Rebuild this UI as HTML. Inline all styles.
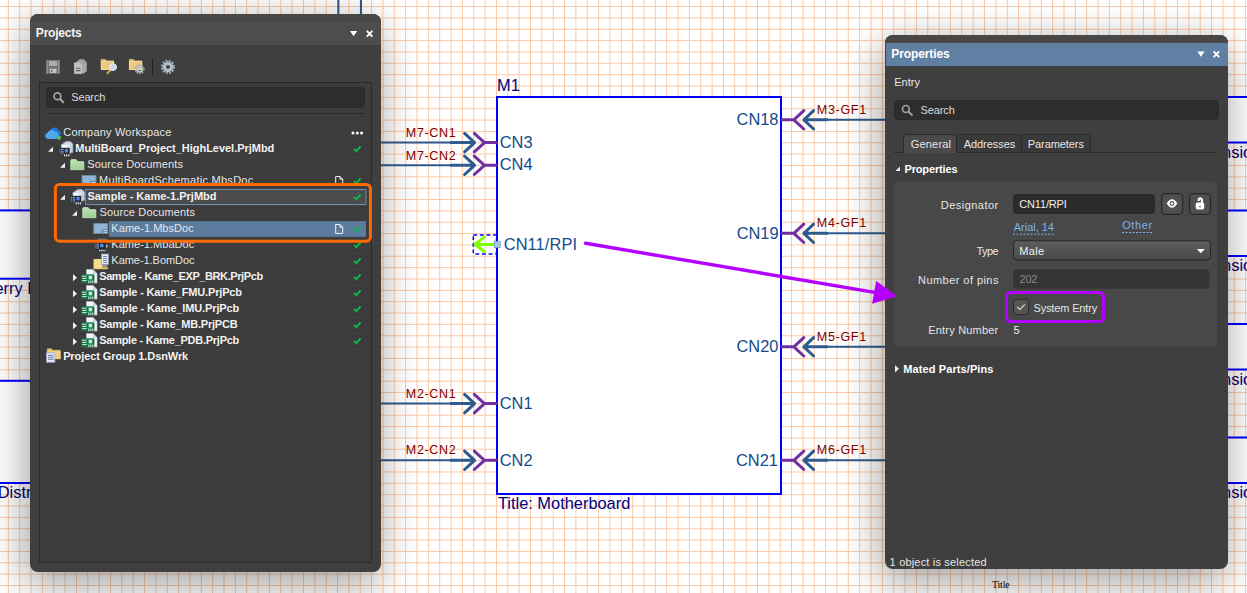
<!DOCTYPE html>
<html lang="en"><head><meta charset="utf-8"><title>Properties</title>
<style>
html,body{margin:0;padding:0;background:#ffffff;overflow:hidden}
#root{position:relative;width:1247px;height:593px;overflow:hidden;background:#ffffff;font-family:"Liberation Sans",sans-serif}
.panel{position:absolute;background:#3f3f3f;border-radius:8px;box-shadow:-3px 4px 36px rgba(0,0,0,0.245),-3px 24px 46px rgba(0,0,0,0.17);overflow:hidden}
.panel .band{position:absolute;left:0;right:0;top:0;background:#494746}
.panel .head{position:absolute;left:0;right:0}
svg text{white-space:pre}
#ui,#top{position:absolute;left:0;top:0}
</style></head><body>
<div id="root">
<svg id="sch" width="1247" height="593" viewBox="0 0 1247 593" style="position:absolute;left:0;top:0">
<rect width="1247" height="593" fill="#ffffff"/>
<path d="M8.35 0V593M19.70 0V593M31.05 0V593M42.40 0V593M53.75 0V593M65.10 0V593M76.45 0V593M87.80 0V593M99.15 0V593M110.51 0V593M121.86 0V593M133.21 0V593M144.56 0V593M155.91 0V593M167.26 0V593M178.61 0V593M189.96 0V593M201.31 0V593M212.66 0V593M224.02 0V593M235.37 0V593M246.72 0V593M258.07 0V593M269.42 0V593M280.77 0V593M292.12 0V593M303.47 0V593M314.82 0V593M326.18 0V593M337.53 0V593M348.88 0V593M360.23 0V593M371.58 0V593M382.93 0V593M394.28 0V593M405.63 0V593M416.98 0V593M428.33 0V593M439.69 0V593M451.04 0V593M462.39 0V593M473.74 0V593M485.09 0V593M496.44 0V593M507.79 0V593M519.14 0V593M530.49 0V593M541.84 0V593M553.20 0V593M564.55 0V593M575.90 0V593M587.25 0V593M598.60 0V593M609.95 0V593M621.30 0V593M632.65 0V593M644.00 0V593M655.35 0V593M666.71 0V593M678.06 0V593M689.41 0V593M700.76 0V593M712.11 0V593M723.46 0V593M734.81 0V593M746.16 0V593M757.51 0V593M768.86 0V593M780.22 0V593M791.57 0V593M802.92 0V593M814.27 0V593M825.62 0V593M836.97 0V593M848.32 0V593M859.67 0V593M871.02 0V593M882.37 0V593M893.73 0V593M905.08 0V593M916.43 0V593M927.78 0V593M939.13 0V593M950.48 0V593M961.83 0V593M973.18 0V593M984.53 0V593M995.88 0V593M1007.24 0V593M1018.59 0V593M1029.94 0V593M1041.29 0V593M1052.64 0V593M1063.99 0V593M1075.34 0V593M1086.69 0V593M1098.04 0V593M1109.39 0V593M1120.75 0V593M1132.10 0V593M1143.45 0V593M1154.80 0V593M1166.15 0V593M1177.50 0V593M1188.85 0V593M1200.20 0V593M1211.55 0V593M1222.90 0V593M1234.26 0V593M1245.61 0V593M0 6.55H1247M0 17.90H1247M0 29.25H1247M0 40.60H1247M0 51.96H1247M0 63.31H1247M0 74.66H1247M0 86.01H1247M0 97.36H1247M0 108.72H1247M0 120.07H1247M0 131.42H1247M0 142.77H1247M0 154.12H1247M0 165.48H1247M0 176.83H1247M0 188.18H1247M0 199.53H1247M0 210.88H1247M0 222.24H1247M0 233.59H1247M0 244.94H1247M0 256.29H1247M0 267.64H1247M0 279.00H1247M0 290.35H1247M0 301.70H1247M0 313.05H1247M0 324.40H1247M0 335.76H1247M0 347.11H1247M0 358.46H1247M0 369.81H1247M0 381.16H1247M0 392.52H1247M0 403.87H1247M0 415.22H1247M0 426.57H1247M0 437.92H1247M0 449.28H1247M0 460.63H1247M0 471.98H1247M0 483.33H1247M0 494.68H1247M0 506.04H1247M0 517.39H1247M0 528.74H1247M0 540.09H1247M0 551.44H1247M0 562.80H1247M0 574.15H1247M0 585.50H1247" stroke="#fbc9a5" stroke-width="1" fill="none"/>
<path d="M338.4 0V20M361 0V20" stroke="#2e5b8f" stroke-width="2" fill="none"/>
<rect x="-60" y="210.4" width="150" height="68.3" fill="#ffffff" stroke="#0000ff" stroke-width="2"/>
<rect x="-60" y="380.8" width="150" height="102.2" fill="#ffffff" stroke="#0000ff" stroke-width="2"/>
<text x="-5.50" y="293.50" fill="#000080" style='font-family:"Liberation Sans", sans-serif;font-size:16.4px;font-weight:400;' >erry Pi</text>
<text x="-2.30" y="497.70" fill="#000080" style='font-family:"Liberation Sans", sans-serif;font-size:16.4px;font-weight:400;' >Distribution</text>
<rect x="1180" y="97.0" width="120" height="45.5" fill="#ffffff" stroke="#0000ff" stroke-width="2"/>
<text x="1222.10" y="157.70" fill="#000080" style='font-family:"Liberation Sans", sans-serif;font-size:16.4px;font-weight:400;' >nsion</text>
<rect x="1180" y="210.5" width="120" height="45.5" fill="#ffffff" stroke="#0000ff" stroke-width="2"/>
<text x="1222.10" y="271.20" fill="#000080" style='font-family:"Liberation Sans", sans-serif;font-size:16.4px;font-weight:400;' >nsion</text>
<rect x="1180" y="324.0" width="120" height="45.5" fill="#ffffff" stroke="#0000ff" stroke-width="2"/>
<text x="1222.10" y="384.70" fill="#000080" style='font-family:"Liberation Sans", sans-serif;font-size:16.4px;font-weight:400;' >nsion</text>
<rect x="1180" y="437.5" width="120" height="45.5" fill="#ffffff" stroke="#0000ff" stroke-width="2"/>
<text x="1222.10" y="498.20" fill="#000080" style='font-family:"Liberation Sans", sans-serif;font-size:16.4px;font-weight:400;' >nsion</text>
<rect x="497" y="97" width="284" height="397" fill="#ffffff" stroke="#0000ff" stroke-width="2"/>
<text x="497.04" y="90.90" fill="#000080" style='font-family:"Liberation Sans", sans-serif;font-size:16.4px;font-weight:400;' >M1</text>
<text x="497.92" y="508.60" fill="#000080" style='font-family:"Liberation Sans", sans-serif;font-size:16.4px;font-weight:400;' >Title: Motherboard</text>
<path d="M360 142.6H452" stroke="#2e5b8f" stroke-width="2" fill="none"/><path d="M451 142.6H474M464.6 133.4L474.6 142.6L464.6 151.79999999999998" stroke="#2e5b8f" stroke-width="3" fill="none" stroke-linecap="round" stroke-linejoin="round"/><path d="M474.3 133.4L484.5 142.6L474.3 151.79999999999998M484.5 142.6H496" stroke="#7030a0" stroke-width="3" fill="none" stroke-linecap="round" stroke-linejoin="round"/><text x="405.85" y="136.80" fill="#800000" style='font-family:"Liberation Sans", sans-serif;font-size:12.5px;font-weight:400;letter-spacing:0.643px;' >M7-CN1</text><text x="499.73" y="147.50" fill="#144a8a" style='font-family:"Liberation Sans", sans-serif;font-size:16.4px;font-weight:400;' >CN3</text>
<path d="M360 165.3H452" stroke="#2e5b8f" stroke-width="2" fill="none"/><path d="M451 165.3H474M464.6 156.10000000000002L474.6 165.3L464.6 174.5" stroke="#2e5b8f" stroke-width="3" fill="none" stroke-linecap="round" stroke-linejoin="round"/><path d="M474.3 156.10000000000002L484.5 165.3L474.3 174.5M484.5 165.3H496" stroke="#7030a0" stroke-width="3" fill="none" stroke-linecap="round" stroke-linejoin="round"/><text x="405.85" y="159.50" fill="#800000" style='font-family:"Liberation Sans", sans-serif;font-size:12.5px;font-weight:400;letter-spacing:0.655px;' >M7-CN2</text><text x="499.73" y="170.20" fill="#144a8a" style='font-family:"Liberation Sans", sans-serif;font-size:16.4px;font-weight:400;' >CN4</text>
<path d="M360 403.6H452" stroke="#2e5b8f" stroke-width="2" fill="none"/><path d="M451 403.6H474M464.6 394.40000000000003L474.6 403.6L464.6 412.8" stroke="#2e5b8f" stroke-width="3" fill="none" stroke-linecap="round" stroke-linejoin="round"/><path d="M474.3 394.40000000000003L484.5 403.6L474.3 412.8M484.5 403.6H496" stroke="#7030a0" stroke-width="3" fill="none" stroke-linecap="round" stroke-linejoin="round"/><text x="405.85" y="397.80" fill="#800000" style='font-family:"Liberation Sans", sans-serif;font-size:12.5px;font-weight:400;letter-spacing:0.643px;' >M2-CN1</text><text x="499.73" y="408.50" fill="#144a8a" style='font-family:"Liberation Sans", sans-serif;font-size:16.4px;font-weight:400;' >CN1</text>
<path d="M360 460.3H452" stroke="#2e5b8f" stroke-width="2" fill="none"/><path d="M451 460.3H474M464.6 451.1L474.6 460.3L464.6 469.5" stroke="#2e5b8f" stroke-width="3" fill="none" stroke-linecap="round" stroke-linejoin="round"/><path d="M474.3 451.1L484.5 460.3L474.3 469.5M484.5 460.3H496" stroke="#7030a0" stroke-width="3" fill="none" stroke-linecap="round" stroke-linejoin="round"/><text x="405.85" y="454.10" fill="#800000" style='font-family:"Liberation Sans", sans-serif;font-size:12.5px;font-weight:400;letter-spacing:0.655px;' >M2-CN2</text><text x="499.73" y="465.90" fill="#144a8a" style='font-family:"Liberation Sans", sans-serif;font-size:16.4px;font-weight:400;' >CN2</text>
<path d="M826 119.8H900" stroke="#2e5b8f" stroke-width="2" fill="none"/><path d="M804.5 119.8H827M813.6 110.6L803.9 119.8L813.6 129.0" stroke="#2e5b8f" stroke-width="3" fill="none" stroke-linecap="round" stroke-linejoin="round"/><path d="M803.8 110.6L793.8 119.8L803.8 129.0M793.8 119.8H782" stroke="#7030a0" stroke-width="3" fill="none" stroke-linecap="round" stroke-linejoin="round"/><text x="816.85" y="114.00" fill="#800000" style='font-family:"Liberation Sans", sans-serif;font-size:12.5px;font-weight:400;letter-spacing:0.680px;' >M3-GF1</text><text x="736.55" y="124.70" fill="#144a8a" style='font-family:"Liberation Sans", sans-serif;font-size:16.4px;font-weight:400;' >CN18</text>
<path d="M826 233.3H900" stroke="#2e5b8f" stroke-width="2" fill="none"/><path d="M804.5 233.3H827M813.6 224.10000000000002L803.9 233.3L813.6 242.5" stroke="#2e5b8f" stroke-width="3" fill="none" stroke-linecap="round" stroke-linejoin="round"/><path d="M803.8 224.10000000000002L793.8 233.3L803.8 242.5M793.8 233.3H782" stroke="#7030a0" stroke-width="3" fill="none" stroke-linecap="round" stroke-linejoin="round"/><text x="816.85" y="226.80" fill="#800000" style='font-family:"Liberation Sans", sans-serif;font-size:12.5px;font-weight:400;letter-spacing:0.680px;' >M4-GF1</text><text x="736.64" y="238.80" fill="#144a8a" style='font-family:"Liberation Sans", sans-serif;font-size:16.4px;font-weight:400;' >CN19</text>
<path d="M826 346.8H900" stroke="#2e5b8f" stroke-width="2" fill="none"/><path d="M804.5 346.8H827M813.6 337.6L803.9 346.8L813.6 356.0" stroke="#2e5b8f" stroke-width="3" fill="none" stroke-linecap="round" stroke-linejoin="round"/><path d="M803.8 337.6L793.8 346.8L803.8 356.0M793.8 346.8H782" stroke="#7030a0" stroke-width="3" fill="none" stroke-linecap="round" stroke-linejoin="round"/><text x="816.85" y="341.00" fill="#800000" style='font-family:"Liberation Sans", sans-serif;font-size:12.5px;font-weight:400;letter-spacing:0.680px;' >M5-GF1</text><text x="736.47" y="351.70" fill="#144a8a" style='font-family:"Liberation Sans", sans-serif;font-size:16.4px;font-weight:400;' >CN20</text>
<path d="M826 460.3H900" stroke="#2e5b8f" stroke-width="2" fill="none"/><path d="M804.5 460.3H827M813.6 451.1L803.9 460.3L813.6 469.5" stroke="#2e5b8f" stroke-width="3" fill="none" stroke-linecap="round" stroke-linejoin="round"/><path d="M803.8 451.1L793.8 460.3L803.8 469.5M793.8 460.3H782" stroke="#7030a0" stroke-width="3" fill="none" stroke-linecap="round" stroke-linejoin="round"/><text x="816.85" y="453.80" fill="#800000" style='font-family:"Liberation Sans", sans-serif;font-size:12.5px;font-weight:400;letter-spacing:0.680px;' >M6-GF1</text><text x="736.04" y="465.90" fill="#144a8a" style='font-family:"Liberation Sans", sans-serif;font-size:16.4px;font-weight:400;' >CN21</text>
<rect x="473.3" y="235.1" width="23.2" height="18.9" fill="none" stroke="#0000ff" stroke-width="1.5" stroke-dasharray="3.8 2.8"/>
<path d="M475.5 244.4H495M484.4 237.1L475 244.4L484.4 251.70000000000002" stroke="#7fff00" stroke-width="3" fill="none" stroke-linecap="round" stroke-linejoin="round"/>
<rect x="494.3" y="241.5" width="6" height="6" fill="#a9c9e3" stroke="#6f9fd0" stroke-width="0.8"/>
<text x="503.73" y="249.70" fill="#144a8a" style='font-family:"Liberation Sans", sans-serif;font-size:16.4px;font-weight:400;letter-spacing:0.111px;' >CN11/RPI</text>
<text x="992.05" y="588.00" fill="#000000" style='font-family:"Liberation Serif", serif;font-size:9.8px;font-weight:400;letter-spacing:-0.148px;' >Title</text>
</svg>
<div class="panel" style="left:30px;top:14px;width:351px;height:558px"><div class="band" style="height:8px"></div><div class="head" style="top:7.6px;height:23.4px;background:#4d4d4d"></div></div>
<div class="panel" style="left:885px;top:35px;width:343px;height:534px"><div class="band" style="height:8px"></div><div class="head" style="left:1px;top:8px;height:22.8px;background:#5f80a3"></div></div>
<svg id="ui" width="1247" height="593" viewBox="0 0 1247 593">
<text x="35.87" y="36.90" fill="#f4f4f4" style='font-family:"Liberation Sans", sans-serif;font-size:12px;font-weight:700;letter-spacing:-0.219px;' >Projects</text>
<path d="M350 31h7.2l-3.6 5.2z" fill="#ffffff"/>
<path d="M366.8 30.8l5.6 5.8M372.4 30.8l-5.6 5.8" stroke="#ffffff" stroke-width="1.9" fill="none"/>
<rect x="46.4" y="60" width="13.2" height="13.7" fill="#707070"/><path d="M47.1 60v13.7M58.9 60v13.7" stroke="#9c9c9c" stroke-width="1.2"/><rect x="48.9" y="60.9" width="8.4" height="5.1" fill="#ababab"/><rect x="49.7" y="68.7" width="6.8" height="4.4" fill="#c2c2c2"/><rect x="50.9" y="69.8" width="1.5" height="2.4" fill="#6a6a6a"/><path d="M79.5 59.4h4l3 3v9h-7z" fill="#9a9a9a" stroke="#b4b4b4" stroke-width="0.6"/><path d="M77.5 61h4l3 3v9h-7z" fill="#a6a6a6" stroke="#bcbcbc" stroke-width="0.6"/><path d="M74.4 62.8h4.2l3 3v7.8h-7.2z" fill="#c4c4c4" stroke="#d0d0d0" stroke-width="0.6"/><path d="M76 68.3h4.6M76 70.6h4.6" stroke="#5a5a5a" stroke-width="1.1"/><path d="M100.8 59.699999999999996q0-0.8 0.8-0.8h3.6l1.5 1.7h6.6q0.8 0 0.8 0.8v8.6h-13.3z" fill="#d6b368"/><rect x="101.3" y="61.5" width="12.3" height="8" fill="#ebca80" stroke="#f5e2a8" stroke-width="0.8"/><path d="M107.3 73.3l3.3-3.3" stroke="#d8b060" stroke-width="1.8" stroke-linecap="round"/><circle cx="113.1" cy="67.1" r="3.4" fill="#c6d9ea" stroke="#eef3f8" stroke-width="1"/><path d="M128.9 59.699999999999996q0-0.8 0.8-0.8h3.6l1.5 1.7h6.6q0.8 0 0.8 0.8v8.6h-13.3z" fill="#d6b368"/><rect x="129.4" y="61.5" width="12.3" height="8" fill="#ebca80" stroke="#f5e2a8" stroke-width="0.8"/><circle cx="139.6" cy="69.2" r="4.2" fill="none" stroke="#9aa8b4" stroke-width="1.8" stroke-dasharray="1.5 1.14"/><circle cx="139.6" cy="69.2" r="2.6" fill="none" stroke="#b4c0ca" stroke-width="2"/><path d="M152.5 58.9v16" stroke="#1f1f1f" stroke-width="1.1"/><circle cx="168" cy="66.9" r="6" fill="none" stroke="#9eaab4" stroke-width="2.2" stroke-dasharray="1.9 1.24"/><circle cx="168" cy="66.9" r="3.6" fill="none" stroke="#b2bec8" stroke-width="3.3"/>
<rect x="39.5" y="82.5" width="332" height="480" fill="#3c3c3c" stroke="#2a2a2a" stroke-width="1"/>
<rect x="46.5" y="87.5" width="318" height="20" rx="3.5" fill="#2d2d2d" stroke="#2a2a2a" stroke-width="1"/>
<circle cx="57.4" cy="96.2" r="3.4" fill="none" stroke="#a4a4a4" stroke-width="1.7"/><path d="M60.1 99l3.2 3.2" stroke="#a4a4a4" stroke-width="2" stroke-linecap="round"/>
<text x="71.25" y="101.00" fill="#dcdcdc" style='font-family:"Liberation Sans", sans-serif;font-size:11px;font-weight:400;letter-spacing:-0.151px;' >Search</text>
<path d="M46 113.5H365" stroke="#2a2a2a" stroke-width="1"/>
<path d="M63 141.5H366M76 157.5H366M87 173.5H366M100 189.5H366M87 205.5H366M100 221.5H366M112 237.5H366M112 253.5H366M112 269.5H366M99 285.5H366M99 301.5H366M99 317.5H366M99 333.5H366M99 349.5H366M63 365.5H366" stroke="#424242" stroke-width="1"/>
<rect x="85.5" y="189.5" width="280.5" height="15" fill="#4c4c4c" stroke="#6c8cae" stroke-width="1"/>
<rect x="109" y="221.2" width="257" height="15.6" fill="#5c7c9f"/>
<text x="63.30" y="136.00" fill="#e6e6e6" style='font-family:"Liberation Sans", sans-serif;font-size:11px;font-weight:400;letter-spacing:0.191px;' >Company Workspace</text>
<text x="75.33" y="152.00" fill="#f2f2f2" style='font-family:"Liberation Sans", sans-serif;font-size:11px;font-weight:700;letter-spacing:-0.026px;' >MultiBoard_Project_HighLevel.PrjMbd</text>
<text x="87.25" y="168.00" fill="#e6e6e6" style='font-family:"Liberation Sans", sans-serif;font-size:11px;font-weight:400;letter-spacing:0.145px;' >Source Documents</text>
<text x="99.07" y="184.00" fill="#e6e6e6" style='font-family:"Liberation Sans", sans-serif;font-size:11px;font-weight:400;letter-spacing:0.274px;' >MultiBoardSchematic.MbsDoc</text>
<text x="87.42" y="200.00" fill="#f2f2f2" style='font-family:"Liberation Sans", sans-serif;font-size:11px;font-weight:700;letter-spacing:0.006px;' >Sample - Kame-1.PrjMbd</text>
<text x="99.45" y="216.00" fill="#e6e6e6" style='font-family:"Liberation Sans", sans-serif;font-size:11px;font-weight:400;letter-spacing:0.138px;' >Source Documents</text>
<text x="111.37" y="232.00" fill="#e6e6e6" style='font-family:"Liberation Sans", sans-serif;font-size:11px;font-weight:400;letter-spacing:0.034px;' >Kame-1.MbsDoc</text>
<text x="111.37" y="248.00" fill="#e6e6e6" style='font-family:"Liberation Sans", sans-serif;font-size:11px;font-weight:400;letter-spacing:0.021px;' >Kame-1.MbaDoc</text>
<text x="111.37" y="264.00" fill="#e6e6e6" style='font-family:"Liberation Sans", sans-serif;font-size:11px;font-weight:400;letter-spacing:-0.047px;' >Kame-1.BomDoc</text>
<text x="99.22" y="280.00" fill="#f2f2f2" style='font-family:"Liberation Sans", sans-serif;font-size:11px;font-weight:700;letter-spacing:-0.405px;' >Sample - Kame_EXP_BRK.PrjPcb</text>
<text x="99.22" y="296.00" fill="#f2f2f2" style='font-family:"Liberation Sans", sans-serif;font-size:11px;font-weight:700;letter-spacing:-0.172px;' >Sample - Kame_FMU.PrjPcb</text>
<text x="99.22" y="312.00" fill="#f2f2f2" style='font-family:"Liberation Sans", sans-serif;font-size:11px;font-weight:700;letter-spacing:-0.132px;' >Sample - Kame_IMU.PrjPcb</text>
<text x="99.22" y="328.00" fill="#f2f2f2" style='font-family:"Liberation Sans", sans-serif;font-size:11px;font-weight:700;letter-spacing:-0.210px;' >Sample - Kame_MB.PrjPCB</text>
<text x="99.22" y="344.00" fill="#f2f2f2" style='font-family:"Liberation Sans", sans-serif;font-size:11px;font-weight:700;letter-spacing:-0.263px;' >Sample - Kame_PDB.PrjPcb</text>
<text x="63.13" y="360.00" fill="#f2f2f2" style='font-family:"Liberation Sans", sans-serif;font-size:11px;font-weight:700;letter-spacing:-0.089px;' >Project Group 1.DsnWrk</text>
<path d="M51.0 136a3 3 0 0 1-0.6-5.6a4.4 4.4 0 0 1 8.2-0.2a3.1 3.1 0 0 1 0.6 5.8z" fill="#1f78e0"/><path d="M48.0 139a3.1 3.1 0 0 1-0.5-6.1a4.3 4.3 0 0 1 7.6-1.2a3.7 3.7 0 0 1 0.7 7.3z" fill="#4ea8ea"/><circle cx="59.0" cy="137.8" r="2.1" fill="#4fc34f"/>
<circle cx="353" cy="133" r="1.5" fill="#fff"/><circle cx="357.3" cy="133" r="1.5" fill="#fff"/><circle cx="361.6" cy="133" r="1.5" fill="#fff"/>
<path d="M53 146.8V151.8H48Z" fill="#f0f0f0"/>
<path d="M65.6 141.4h4.6l2.6 2.6v8.6h-7.2z" fill="#cfd8ea" stroke="#aab6cc" stroke-width="0.6"/><path d="M63.4 142.8h4.6l2.6 2.6v8h-7.2z" fill="#e4eaf5" stroke="#aab6cc" stroke-width="0.6"/><path d="M61.4 144.2h4.6l2.6 2.6v7h-7.2z" fill="#f6f8fc" stroke="#b4c0d4" stroke-width="0.6"/><rect x="58.1" y="147.8" width="11.6" height="6.5" fill="#262a33"/><rect x="65.0" y="149" width="2.9" height="3.4" fill="#4f8fff"/><path d="M59.1 149.4h1.2M61.1 149.4h2.4M59.1 151.2h1.2M61.1 151.2h2.4M59.1 153h1.2M61.1 153h2.4" stroke="#9fc4ff" stroke-width="0.9"/><path d="M64.0 155.3h6.4" stroke="#f4f4f4" stroke-width="1.7" stroke-dasharray="1.2 0.9"/>
<path d="M65 162.8V167.8H60Z" fill="#f0f0f0"/>
<defs><linearGradient id="fg" x1="0" y1="0" x2="0" y2="1"><stop offset="0" stop-color="#bfe3b6"/><stop offset="1" stop-color="#9ccf92"/></linearGradient></defs><path d="M70.7 160.7q0-1.2 1.2-1.2h3.6q1 0 1.4 0.9l0.5 1.2h5.6q0.9 0 0.9 0.9v7.2h-13.2z" fill="url(#fg)" stroke="#cdebc5" stroke-width="0.7"/>
<rect x="82.0" y="175.5" width="14" height="10" fill="#8fb4d6" stroke="#5f8f9f" stroke-width="1"/><rect x="90.0" y="181" width="6" height="4.5" fill="#5f86a8"/><path d="M91.5 182.5h4M91.5 184.3h4" stroke="#e8f0f8" stroke-width="0.8"/>
<path d="M65 194.8V199.8H60Z" fill="#f0f0f0"/>
<path d="M77.2 189.4h4.6l2.6 2.6v8.6h-7.2z" fill="#cfd8ea" stroke="#aab6cc" stroke-width="0.6"/><path d="M75.0 190.8h4.6l2.6 2.6v8h-7.2z" fill="#e4eaf5" stroke="#aab6cc" stroke-width="0.6"/><path d="M73.0 192.2h4.6l2.6 2.6v7h-7.2z" fill="#f6f8fc" stroke="#b4c0d4" stroke-width="0.6"/><rect x="69.7" y="195.8" width="11.6" height="6.5" fill="#262a33"/><rect x="76.60000000000001" y="197" width="2.9" height="3.4" fill="#4f8fff"/><path d="M70.7 197.4h1.2M72.7 197.4h2.4M70.7 199.2h1.2M72.7 199.2h2.4M70.7 201h1.2M72.7 201h2.4" stroke="#9fc4ff" stroke-width="0.9"/><path d="M75.60000000000001 203.3h6.4" stroke="#f4f4f4" stroke-width="1.7" stroke-dasharray="1.2 0.9"/>
<path d="M77 210.8V215.8H72Z" fill="#f0f0f0"/>
<defs><linearGradient id="fg" x1="0" y1="0" x2="0" y2="1"><stop offset="0" stop-color="#bfe3b6"/><stop offset="1" stop-color="#9ccf92"/></linearGradient></defs><path d="M82.7 208.7q0-1.2 1.2-1.2h3.6q1 0 1.4 0.9l0.5 1.2h5.6q0.9 0 0.9 0.9v7.2h-13.2z" fill="url(#fg)" stroke="#cdebc5" stroke-width="0.7"/>
<rect x="93.8" y="223.5" width="14" height="10" fill="#8fb4d6" stroke="#5f8f9f" stroke-width="1"/><rect x="101.8" y="229" width="6" height="4.5" fill="#5f86a8"/><path d="M103.3 230.5h4M103.3 232.3h4" stroke="#e8f0f8" stroke-width="0.8"/>
<path d="M97.6 239.2h9.5" stroke="#8a8a8a" stroke-width="1"/><rect x="93.6" y="242.9" width="11.8" height="6.4" fill="#23262e"/><rect x="100.19999999999999" y="243.79999999999998" width="3.2" height="3.4" fill="#4f8fff"/><path d="M94.39999999999999 244.2h1.2M96.39999999999999 244.2h2.6M94.39999999999999 246.1h1.2M96.39999999999999 246.1h2.6M94.39999999999999 248.0h1.2M96.39999999999999 248.0h2.6" stroke="#a8c8ff" stroke-width="0.9"/><path d="M99.19999999999999 250.5h6.6" stroke="#f4f4f4" stroke-width="1.7" stroke-dasharray="1.2 0.9"/><path d="M106.0 244.79999999999998l1.6 1.4l-1.6 1.4" stroke="#f0f0f0" stroke-width="1" fill="none"/>
<path d="M93.7 259.5h6v8h8v1.5h-14z" fill="#f0d98a" stroke="#c9a94a" stroke-width="0.6"/><rect x="94.2" y="259.0" width="8" height="9" fill="#f3dc8c"/><rect x="101.5" y="254.0" width="7" height="10.5" fill="#e6ecf6" stroke="#8f9fc0" stroke-width="0.7"/><path d="M103.0 256.5h4M103.0 258.5h4M103.0 260.5h4M103.0 262.5h4" stroke="#5a6a90" stroke-width="0.8"/><path d="M101.2 266.0h6" stroke="#fff4c0" stroke-width="1"/>
<path d="M73 274.1L77 277.70000000000005L73 281.3Z" fill="#f0f0f0"/>
<path d="M86.5 269.5h6.5l4 4v9.5h-10.5z" fill="#f4f6fa" stroke="#b8c4d8" stroke-width="0.6"/><path d="M93 269.5v4h4" fill="#d0d8e8" stroke="#b8c4d8" stroke-width="0.5"/><rect x="81" y="274.4" width="13.4" height="8.8" fill="#0c7443"/><path d="M82.2 276.2h4.5M82.2 278.4h4.5M82.2 280.59999999999997h4.5" stroke="#d8f0e0" stroke-width="1"/><rect x="88.6" y="275.7" width="3.6" height="3.6" fill="#c8e8d4"/><path d="M88.8 280.5v2.4M90.8 280.5v2.4M92.8 280.5v2.4" stroke="#e8f8ee" stroke-width="1"/>
<path d="M73 290.1L77 293.70000000000005L73 297.3Z" fill="#f0f0f0"/>
<path d="M86.5 285.5h6.5l4 4v9.5h-10.5z" fill="#f4f6fa" stroke="#b8c4d8" stroke-width="0.6"/><path d="M93 285.5v4h4" fill="#d0d8e8" stroke="#b8c4d8" stroke-width="0.5"/><rect x="81" y="290.4" width="13.4" height="8.8" fill="#0c7443"/><path d="M82.2 292.2h4.5M82.2 294.4h4.5M82.2 296.59999999999997h4.5" stroke="#d8f0e0" stroke-width="1"/><rect x="88.6" y="291.7" width="3.6" height="3.6" fill="#c8e8d4"/><path d="M88.8 296.5v2.4M90.8 296.5v2.4M92.8 296.5v2.4" stroke="#e8f8ee" stroke-width="1"/>
<path d="M73 306.1L77 309.70000000000005L73 313.3Z" fill="#f0f0f0"/>
<path d="M86.5 301.5h6.5l4 4v9.5h-10.5z" fill="#f4f6fa" stroke="#b8c4d8" stroke-width="0.6"/><path d="M93 301.5v4h4" fill="#d0d8e8" stroke="#b8c4d8" stroke-width="0.5"/><rect x="81" y="306.4" width="13.4" height="8.8" fill="#0c7443"/><path d="M82.2 308.2h4.5M82.2 310.4h4.5M82.2 312.59999999999997h4.5" stroke="#d8f0e0" stroke-width="1"/><rect x="88.6" y="307.7" width="3.6" height="3.6" fill="#c8e8d4"/><path d="M88.8 312.5v2.4M90.8 312.5v2.4M92.8 312.5v2.4" stroke="#e8f8ee" stroke-width="1"/>
<path d="M73 322.1L77 325.70000000000005L73 329.3Z" fill="#f0f0f0"/>
<path d="M86.5 317.5h6.5l4 4v9.5h-10.5z" fill="#f4f6fa" stroke="#b8c4d8" stroke-width="0.6"/><path d="M93 317.5v4h4" fill="#d0d8e8" stroke="#b8c4d8" stroke-width="0.5"/><rect x="81" y="322.4" width="13.4" height="8.8" fill="#0c7443"/><path d="M82.2 324.2h4.5M82.2 326.4h4.5M82.2 328.59999999999997h4.5" stroke="#d8f0e0" stroke-width="1"/><rect x="88.6" y="323.7" width="3.6" height="3.6" fill="#c8e8d4"/><path d="M88.8 328.5v2.4M90.8 328.5v2.4M92.8 328.5v2.4" stroke="#e8f8ee" stroke-width="1"/>
<path d="M73 338.1L77 341.70000000000005L73 345.3Z" fill="#f0f0f0"/>
<path d="M86.5 333.5h6.5l4 4v9.5h-10.5z" fill="#f4f6fa" stroke="#b8c4d8" stroke-width="0.6"/><path d="M93 333.5v4h4" fill="#d0d8e8" stroke="#b8c4d8" stroke-width="0.5"/><rect x="81" y="338.4" width="13.4" height="8.8" fill="#0c7443"/><path d="M82.2 340.2h4.5M82.2 342.4h4.5M82.2 344.59999999999997h4.5" stroke="#d8f0e0" stroke-width="1"/><rect x="88.6" y="339.7" width="3.6" height="3.6" fill="#c8e8d4"/><path d="M88.8 344.5v2.4M90.8 344.5v2.4M92.8 344.5v2.4" stroke="#e8f8ee" stroke-width="1"/>
<path d="M47 349.8q0-1.2 1.2-1.2h3l1.3 1.5h7q1 0 1 1v8h-13.5z" fill="#e8c878" stroke="#b8964a" stroke-width="0.6"/><rect x="47.5" y="351.6" width="13" height="7" fill="#f0d48a"/><rect x="46.4" y="352.8" width="8.5" height="9.5" fill="#e4eaf6" stroke="#8f9fc0" stroke-width="0.7"/><path d="M48 355.3h5.5M48 357.3h5.5M48 359.3h5.5" stroke="#5a6a90" stroke-width="0.9"/>
<path d="M353.9 149.1L356.3 151.20000000000002L360.6 146.5" stroke="#10b84c" stroke-width="1.9" fill="none"/>
<path d="M353.9 181.1L356.3 183.20000000000002L360.6 178.5" stroke="#10b84c" stroke-width="1.9" fill="none"/>
<path d="M353.9 197.1L356.3 199.20000000000002L360.6 194.5" stroke="#10b84c" stroke-width="1.9" fill="none"/>
<path d="M353.9 229.1L356.3 231.20000000000002L360.6 226.5" stroke="#10b84c" stroke-width="1.9" fill="none"/>
<path d="M353.9 245.1L356.3 247.20000000000002L360.6 242.5" stroke="#10b84c" stroke-width="1.9" fill="none"/>
<path d="M353.9 261.09999999999997L356.3 263.2L360.6 258.5" stroke="#10b84c" stroke-width="1.9" fill="none"/>
<path d="M353.9 277.09999999999997L356.3 279.2L360.6 274.5" stroke="#10b84c" stroke-width="1.9" fill="none"/>
<path d="M353.9 293.09999999999997L356.3 295.2L360.6 290.5" stroke="#10b84c" stroke-width="1.9" fill="none"/>
<path d="M353.9 309.09999999999997L356.3 311.2L360.6 306.5" stroke="#10b84c" stroke-width="1.9" fill="none"/>
<path d="M353.9 325.09999999999997L356.3 327.2L360.6 322.5" stroke="#10b84c" stroke-width="1.9" fill="none"/>
<path d="M353.9 341.09999999999997L356.3 343.2L360.6 338.5" stroke="#10b84c" stroke-width="1.9" fill="none"/>
<path d="M335.7 176.5H340.0L342.7 179.2V185.4H335.7ZM340.0 176.5V179.2H342.7" stroke="#f4f4f4" stroke-width="1" fill="none"/>
<path d="M335.7 224.5H340.0L342.7 227.2V233.4H335.7ZM340.0 224.5V227.2H342.7" stroke="#f4f4f4" stroke-width="1" fill="none"/>
<rect x="55.4" y="184.5" width="315" height="56.7" rx="4" fill="none" stroke="#ff6a00" stroke-width="3"/>
<text x="891.27" y="57.70" fill="#ffffff" style='font-family:"Liberation Sans", sans-serif;font-size:12px;font-weight:700;letter-spacing:-0.103px;' >Properties</text>
<path d="M1197.3 51.6h7.2l-3.6 5.2z" fill="#ffffff"/>
<path d="M1213.6 51.3l5.6 5.8M1219.2 51.3l-5.6 5.8" stroke="#ffffff" stroke-width="1.9" fill="none"/>
<text x="894.27" y="85.60" fill="#e6e6e6" style='font-family:"Liberation Sans", sans-serif;font-size:11px;font-weight:400;letter-spacing:0.011px;' >Entry</text>
<rect x="894.5" y="100.5" width="324" height="19" rx="3.5" fill="#2d2d2d" stroke="#2a2a2a" stroke-width="1"/>
<circle cx="905.9" cy="108.9" r="3.4" fill="none" stroke="#9c9c9c" stroke-width="1.7"/><path d="M908.6 111.7l3.3 3.3" stroke="#9c9c9c" stroke-width="2" stroke-linecap="round"/>
<text x="920.56" y="114.00" fill="#dcdcdc" style='font-family:"Liberation Sans", sans-serif;font-size:11px;font-weight:400;letter-spacing:-0.131px;' >Search</text>
<path d="M903.5 152.5V138q0-3.5 3.5-3.5H953.0q3.5 0 3.5 3.5V152.5" fill="#4a4a4a" stroke="#2b2b2b" stroke-width="1"/>
<path d="M956.5 152.5V138q0-3.5 3.5-3.5H1018.0q3.5 0 3.5 3.5V152.5" fill="#3a3a3a" stroke="#2b2b2b" stroke-width="1"/>
<path d="M1021.5 152.5V138q0-3.5 3.5-3.5H1087.0q3.5 0 3.5 3.5V152.5" fill="#3a3a3a" stroke="#2b2b2b" stroke-width="1"/>
<path d="M894 152.5H1217" stroke="#2b2b2b" stroke-width="1"/>
<path d="M904 152.5H956" stroke="#4a4a4a" stroke-width="1"/>
<text x="910.80" y="147.70" fill="#e6e6e6" style='font-family:"Liberation Sans", sans-serif;font-size:11px;font-weight:400;letter-spacing:0.168px;' >General</text>
<text x="963.65" y="147.70" fill="#e6e6e6" style='font-family:"Liberation Sans", sans-serif;font-size:11px;font-weight:400;letter-spacing:-0.043px;' >Addresses</text>
<text x="1027.77" y="147.70" fill="#e6e6e6" style='font-family:"Liberation Sans", sans-serif;font-size:11px;font-weight:400;letter-spacing:-0.073px;' >Parameters</text>
<path d="M900 166.4V171H895.3Z" fill="#f0f0f0"/>
<text x="904.44" y="172.90" fill="#ffffff" style='font-family:"Liberation Sans", sans-serif;font-size:11px;font-weight:700;letter-spacing:-0.143px;' >Properties</text>
<rect x="894" y="182" width="323" height="164.8" rx="3.5" fill="#484848"/>
<text x="940.87" y="208.90" fill="#e6e6e6" style='font-family:"Liberation Sans", sans-serif;font-size:11px;font-weight:400;letter-spacing:0.457px;' >Designator</text>
<rect x="1013.5" y="194.5" width="141" height="19" rx="3.5" fill="#2b2b2b" stroke="#272727" stroke-width="1"/>
<text x="1019.30" y="208.40" fill="#f0f0f0" style='font-family:"Liberation Sans", sans-serif;font-size:11px;font-weight:400;letter-spacing:-0.169px;' >CN11/RPI</text>
<rect x="1161.6" y="193.7" width="21" height="20.6" rx="4" fill="#505050" stroke="#272727" stroke-width="1.2"/>
<path d="M1166.7 203.5q5.3-8.4 10.6 0q-5.3 8.4-10.6 0z" fill="#ffffff"/><circle cx="1172" cy="203.5" r="1.9" fill="none" stroke="#505050" stroke-width="1.1"/>
<rect x="1189.5" y="193.7" width="21" height="20.6" rx="4" fill="#505050" stroke="#272727" stroke-width="1.2"/>
<rect x="1195.7" y="202.6" width="8.5" height="7" rx="1.8" fill="#ffffff"/><path d="M1198.7 200.9v-0.8a1.65 1.65 0 0 1 3.3 0v3" stroke="#ffffff" stroke-width="2.2" fill="none"/><rect x="1199.3" y="205.8" width="1.4" height="1.5" fill="#505050"/>
<text x="1013.75" y="230.60" fill="#7fb0f0" style='font-family:"Liberation Sans", sans-serif;font-size:11px;font-weight:400;letter-spacing:-0.017px;' >Arial, 14</text>
<path d="M1013 234.2H1054" stroke="#7fb0f0" stroke-width="1" stroke-dasharray="2 1.5"/>
<text x="1122.16" y="228.90" fill="#7fb0f0" style='font-family:"Liberation Sans", sans-serif;font-size:11px;font-weight:400;letter-spacing:0.603px;' >Other</text>
<path d="M1122 232.5H1152.5" stroke="#7fb0f0" stroke-width="1" stroke-dasharray="2 1.5"/>
<text x="976.53" y="254.70" fill="#e6e6e6" style='font-family:"Liberation Sans", sans-serif;font-size:11px;font-weight:400;letter-spacing:-0.617px;' >Type</text>
<defs><linearGradient id="dd" x1="0" y1="0" x2="0" y2="1"><stop offset="0" stop-color="#5e5e5e"/><stop offset="1" stop-color="#494949"/></linearGradient></defs>
<rect x="1013.5" y="240.8" width="197" height="19.2" rx="3.5" fill="url(#dd)" stroke="#252525" stroke-width="1"/>
<text x="1019.27" y="254.70" fill="#f0f0f0" style='font-family:"Liberation Sans", sans-serif;font-size:11px;font-weight:400;letter-spacing:0.303px;' >Male</text>
<path d="M1196.8 249h8l-4 4.2z" fill="#ffffff"/>
<text x="918.07" y="283.90" fill="#e6e6e6" style='font-family:"Liberation Sans", sans-serif;font-size:11px;font-weight:400;letter-spacing:0.441px;' >Number of pins</text>
<rect x="1013" y="269.2" width="196.4" height="19.5" rx="3.5" fill="#353535"/>
<text x="1019.60" y="282.80" fill="#8a8a8a" style='font-family:"Liberation Sans", sans-serif;font-size:11px;font-weight:400;letter-spacing:-0.283px;' >202</text>
<rect x="1013.5" y="299.3" width="15" height="15.2" rx="3" fill="#545454" stroke="#2a2a2a" stroke-width="1"/>
<path d="M1017.2 306.9l2.7 2.6l5-5.2" stroke="#e0e0e0" stroke-width="1.1" fill="none"/>
<text x="1033.46" y="312.20" fill="#e6e6e6" style='font-family:"Liberation Sans", sans-serif;font-size:11px;font-weight:400;letter-spacing:-0.150px;' >System Entry</text>
<rect x="1006.6" y="292.4" width="97" height="29" rx="4" fill="none" stroke="#b400ff" stroke-width="3"/>
<text x="928.27" y="333.90" fill="#e6e6e6" style='font-family:"Liberation Sans", sans-serif;font-size:11px;font-weight:400;letter-spacing:0.189px;' >Entry Number</text>
<text x="1013.51" y="333.90" fill="#f0f0f0" style='font-family:"Liberation Sans", sans-serif;font-size:11px;font-weight:400;' >5</text>
<path d="M895 365.2l4 3.6l-4 3.6z" fill="#f0f0f0"/>
<text x="903.34" y="372.70" fill="#ffffff" style='font-family:"Liberation Sans", sans-serif;font-size:11px;font-weight:700;letter-spacing:0.100px;' >Mated Parts/Pins</text>
<text x="889.62" y="566.00" fill="#e6e6e6" style='font-family:"Liberation Sans", sans-serif;font-size:11px;font-weight:400;letter-spacing:0.181px;' >1 object is selected</text>
<path d="M585.6 243.3L876 292.6" stroke="#b400ff" stroke-width="3.4" stroke-linecap="round" fill="none"/>
<path d="M897.4 296.3L876.2 280.9L872.1 303.8Z" fill="#b400ff"/>
</svg>
</div>
</body></html>
